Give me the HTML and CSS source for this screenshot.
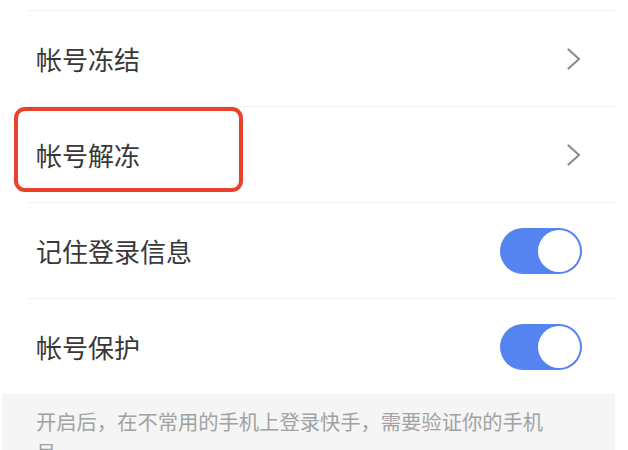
FILE: index.html
```html
<!DOCTYPE html>
<html lang="zh-CN">
<head>
<meta charset="utf-8">
<link rel="stylesheet" href="styles.css">
</head>
<body>
<div class="page">
  <div class="top-space"></div>
  <div class="row">
    <span class="label">帐号冻结</span>
    <svg class="chev" width="14" height="22" viewBox="0 0 14 22"><polyline points="1.5,1.5 12,11 1.5,20.5" fill="none" stroke="#8c8c8c" stroke-width="2.2" stroke-linecap="round" stroke-linejoin="round"/></svg>
  </div>
  <div class="row">
    <span class="label">帐号解冻</span>
    <svg class="chev" width="14" height="22" viewBox="0 0 14 22"><polyline points="1.5,1.5 12,11 1.5,20.5" fill="none" stroke="#8c8c8c" stroke-width="2.2" stroke-linecap="round" stroke-linejoin="round"/></svg>
  </div>
  <div class="row">
    <span class="label">记住登录信息</span>
    <span class="toggle"><span class="knob"></span></span>
  </div>
  <div class="row">
    <span class="label">帐号保护</span>
    <span class="toggle"><span class="knob"></span></span>
  </div>
  <div class="note">开启后，在不常用的手机上登录快手，需要验证你的手机号。</div>
  <div class="highlight"></div>
</div>
</body>
</html>
```
FILE: styles.css
```css
html, body {
  margin: 0;
  padding: 0;
  background: #ffffff;
}
body {
  font-family: "Noto Sans CJK SC", "Noto Sans", sans-serif;
  overflow: hidden;
}
.page {
  position: relative;
  width: 615px;
}
.top-space {
  height: 10px;
}
.row {
  box-sizing: border-box;
  height: 96px;
  margin-left: 29px;
  padding: 0 33px 0 7px;
  border-top: 1px solid #efefef;
  display: flex;
  align-items: center;
  justify-content: space-between;
}
.label {
  font-size: 26px;
  color: #383838;
  line-height: 1;
}
.chev {
  display: block;
  margin-right: 1px;
}
.toggle {
  width: 82px;
  height: 46px;
  border-radius: 23px;
  background: #5584f0;
  display: flex;
  align-items: center;
  justify-content: flex-end;
  padding-right: 2px;
  box-sizing: border-box;
}
.knob {
  width: 42px;
  height: 42px;
  border-radius: 50%;
  background: #ffffff;
}
.note {
  background: #f5f5f5;
  margin-left: 2px;
  padding: 12px 62px 20px 34px;
  font-size: 20.3px;
  line-height: 31px;
  color: #a2a2a2;
  word-break: break-all;
}
.highlight {
  position: absolute;
  left: 14px;
  top: 107px;
  width: 229px;
  height: 85px;
  box-sizing: border-box;
  border: 4px solid #e8412c;
  border-radius: 11px;
}
```
